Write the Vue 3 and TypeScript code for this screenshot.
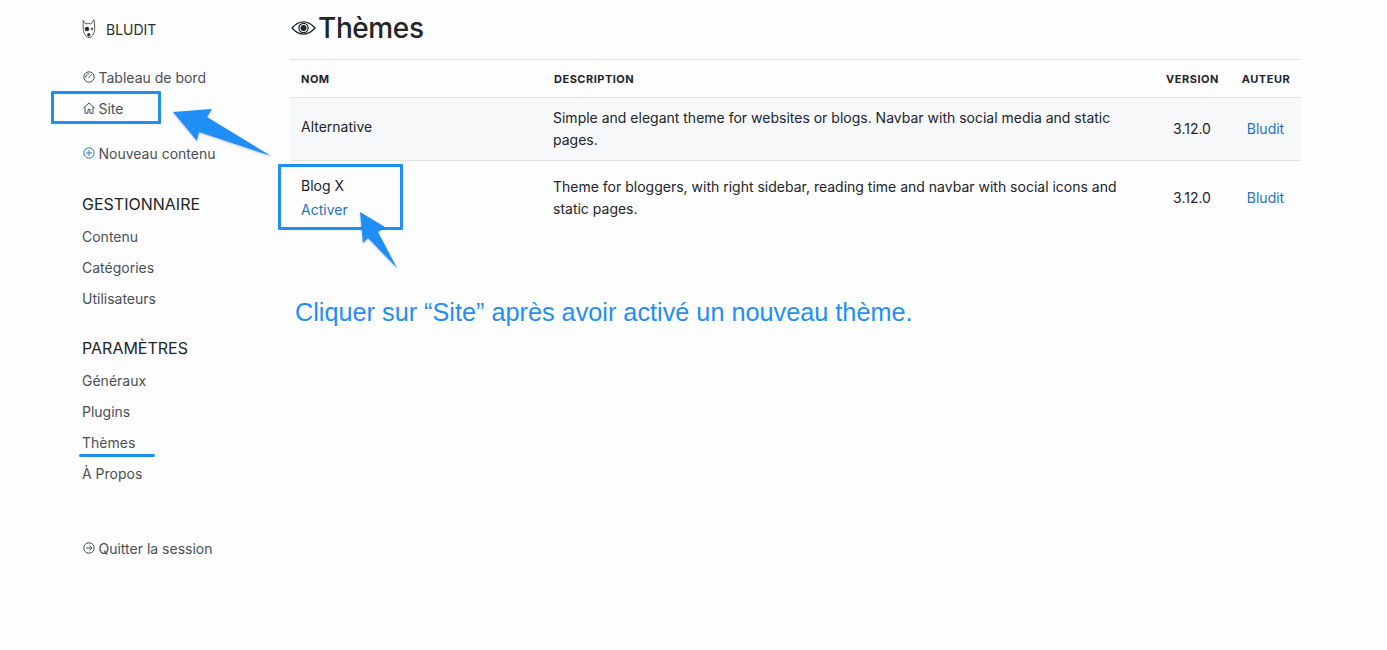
<script setup lang="ts">
const rows = [
  { name: 'Alternative', desc: 'Simple and elegant theme for websites or blogs. Navbar with social media and static pages.', version: '3.12.0', author: 'Bludit', activate: false },
  { name: 'Blog X', desc: 'Theme for bloggers, with right sidebar, reading time and navbar with social icons and static pages.', version: '3.12.0', author: 'Bludit', activate: true },
]
const manage = ['Contenu', 'Catégories', 'Utilisateurs']
const settings = ['Généraux', 'Plugins', 'Thèmes', 'À Propos']
</script>

<template>
  <div class="page">
    <aside class="sidebar">
      <div class="brand">
        <svg class="dog" width="14" height="20" viewBox="0 0 14 20" fill="none" stroke="#333" stroke-width="0.8">
          <path d="M1.2 1.5 L3.8 5 C5.5 4.4 7.5 4.4 9 5 L12 0.8 L12.8 9 C12.8 13 10.5 18.5 7 18.5 C3.5 18.5 1.2 13 1.2 9 Z" />
          <circle cx="5" cy="10" r="1.9" fill="#222" />
          <circle cx="10" cy="9.8" r="0.8" fill="#222" />
          <circle cx="6.8" cy="15.8" r="1.3" fill="#222" />
        </svg>
        <span>BLUDIT</span>
      </div>
      <nav class="top">
        <a class="item">
          <svg class="ic" viewBox="0 0 12 12"><circle cx="6" cy="6" r="5.2" /><path d="M5.6 6.6 L8.6 3.4 M2.8 6.6 A3.2 3.2 0 0 1 6 2.9" /></svg>Tableau de bord
        </a>
        <a class="item">
          <svg class="ic" viewBox="0 0 12 12"><path d="M0.4 6.2 L6 0.9 L11.6 6.2 M2 4.9 V11.2 H5 V7.5 H7 V11.2 H10 V4.9" /></svg>Site
        </a>
        <a class="item new">
          <svg class="ic plus" viewBox="0 0 12 12"><circle cx="6" cy="6" r="5.2" /><path d="M6 3 V9 M3 6 H9" /></svg>Nouveau contenu
        </a>
      </nav>
      <h4 class="head first">GESTIONNAIRE</h4>
      <a v-for="m in manage" :key="m" class="link">{{ m }}</a>
      <h4 class="head second">PARAMÈTRES</h4>
      <a v-for="s in settings" :key="s" class="link">{{ s }}</a>
      <a class="item quit">
        <svg class="ic" viewBox="0 0 12 12"><circle cx="6" cy="6" r="5.2" /><path d="M3 6 H9 M6.5 3.5 L9 6 L6.5 8.5" /></svg>Quitter la session
      </a>
    </aside>

    <main class="main">
      <h2 class="title">
        <svg class="eye" width="25" height="14" viewBox="0 0 25 14" fill="none" stroke="#212529" stroke-width="1.3">
          <path d="M1 7 C5 2.4 9 0.8 12.5 0.8 C16 0.8 20 2.4 24 7 C20 11.6 16 13.2 12.5 13.2 C9 13.2 5 11.6 1 7 Z" />
          <circle cx="12.5" cy="7" r="4.6" />
          <circle cx="12.5" cy="7" r="2.3" fill="#212529" />
        </svg>
        <span>Thèmes</span>
      </h2>
      <table class="table">
        <thead>
          <tr>
            <th class="c-name">NOM</th>
            <th class="c-desc">DESCRIPTION</th>
            <th class="c-ver">VERSION</th>
            <th class="c-auth">AUTEUR</th>
          </tr>
        </thead>
        <tbody>
          <tr v-for="r in rows" :key="r.name" :class="{ shaded: !r.activate }">
            <td class="c-name">
              <div :class="r.activate ? 'stacked' : 'raised'">{{ r.name }}</div>
              <a v-if="r.activate" class="blue">Activer</a>
            </td>
            <td class="c-desc">{{ r.desc }}</td>
            <td class="c-ver center">{{ r.version }}</td>
            <td class="c-auth center"><a class="blue">Bludit</a></td>
          </tr>
        </tbody>
      </table>
      <p class="note">Cliquer sur “Site” après avoir activé un nouveau thème.</p>
    </main>

    <div class="box box-site"></div>
    <div class="box box-blog"></div>
    <div class="underline"></div>
    <svg class="arrows" width="1387" height="650" viewBox="0 0 1387 650">
      <path fill="#1f8ff5" d="M173 112 L212 109 L207 117 L271 156 L199 132 L197 141 Z" />
      <path fill="#1f8ff5" d="M360 212 L385 227 L378 232 L397 268 L368 238 L363 243 Z" />
    </svg>
  </div>
</template>

<style>
html, body { margin: 0; background: #fdfdfe; }
</style>

<style scoped>
.page {
  position: relative;
  display: flex;
  width: 1387px;
  height: 650px;
  overflow: hidden;
  background: #fdfdfe;
  color: #212529;
  font-family: Inter, "Liberation Sans", sans-serif;
  font-size: 14px;
}
.sidebar {
  width: 208px;
  margin-left: 82px;
  display: flex;
  flex-direction: column;
  color: #4a4f55;
  flex: none;
}
.brand {
  display: flex;
  align-items: center;
  gap: 10px;
  height: 20px;
  margin-top: 19px;
  color: #2a2d30;
  font-size: 14px;
}
.top { display: flex; flex-direction: column; margin-top: 28px; }
.item { display: flex; align-items: center; gap: 3.5px; height: 20px; white-space: nowrap; }
.top .item + .item { margin-top: 11px; }
.top .item.new { margin-top: 25px; }
.ic { width: 12px; height: 12px; margin-left: 1px; fill: none; stroke: #4a4f55; stroke-width: 1; flex: none; }
.plus { stroke: #2a7fc4; }
.head { margin: 0; font-size: 16px; font-weight: 400; color: #212529; line-height: 20px; height: 20px; }
.head.first { margin-top: 31px; margin-bottom: 7px; }
.head.second { margin-top: 24px; margin-bottom: 7px; }
.link { display: block; height: 31px; line-height: 31px; }
.quit { margin-top: 49px; }
.main { width: 1011px; flex: none; display: flex; flex-direction: column; }
.title {
  display: flex;
  align-items: center;
  gap: 2px;
  margin: 11px 0 0 1px;
  height: 34px;
  font-size: 28px;
  font-weight: 500;
  color: #212529;
  letter-spacing: -0.4px;
}
.eye { flex: none; }
.table { width: 100%; margin-top: 14px; border-collapse: collapse; table-layout: fixed; border-top: 1px solid #dee2e6; }
th {
  box-sizing: border-box;
  height: 38px;
  padding: 0;
  font-size: 11px;
  font-weight: 700;
  letter-spacing: 0.5px;
  text-align: left;
  color: #212529;
  border-bottom: 1px solid #dee2e6;
}
td { padding: 0; vertical-align: middle; line-height: 22px; }
tbody tr { height: 63px; }
tbody tr.shaded { background: #f7f8fa; border-bottom: 1px solid #dee2e6; }
tbody tr:last-child { height: 74px; }
th.c-name, td.c-name { width: 263px; padding-left: 11px; box-sizing: border-box; }
td.c-desc { padding-right: 30px; box-sizing: border-box; }
.c-desc { width: 601px; }
th.c-desc { padding-left: 1px; }
.c-ver { width: 76px; text-align: center; }
th.c-ver, th.c-auth { text-align: center; padding-left: 1px; }
.c-auth { width: 71px; }
.center { text-align: center; }
.stacked { margin-bottom: 2px; }
.raised { padding-bottom: 4px; }
.blue { color: #2672bd; }
.note { margin: 63px 0 0 5px; font-size: 25.25px; color: #1f8ff5; font-family: "Liberation Sans", sans-serif; }
.box { position: absolute; border: 3px solid #1f8ff5; border-radius: 1px; box-sizing: border-box; }
.box-site { left: 51px; top: 91px; width: 110px; height: 33px; }
.box-blog { left: 278px; top: 164px; width: 125px; height: 66px; }
.underline { position: absolute; left: 79px; top: 454px; width: 76px; height: 3px; border-radius: 2px; background: #1f8ff5; }
.arrows { position: absolute; left: 0; top: 0; pointer-events: none; filter: drop-shadow(0 1px 1px rgba(40, 60, 90, 0.3)); }
</style>
